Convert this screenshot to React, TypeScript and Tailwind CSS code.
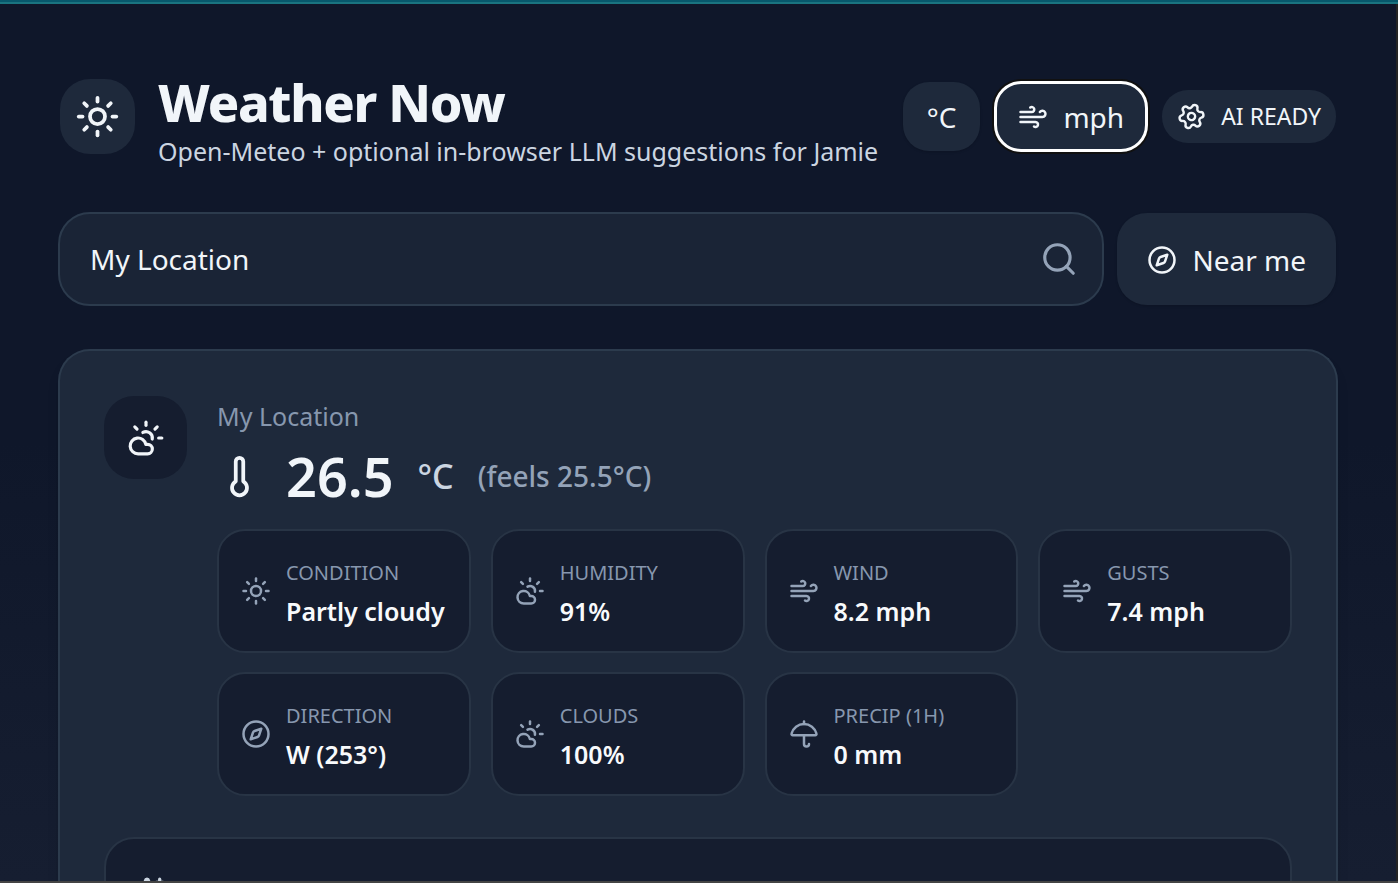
import React from "react";
import { CloudSun, Compass, Search, Settings, Sparkles, Sun, Thermometer, Umbrella, Wind, type LucideIcon } from "lucide-react";

type Metric = { label: string; value: string; icon: LucideIcon };

const metrics: Metric[] = [
  { label: "Condition", value: "Partly cloudy", icon: Sun },
  { label: "Humidity", value: "91%", icon: CloudSun },
  { label: "Wind", value: "8.2 mph", icon: Wind },
  { label: "Gusts", value: "7.4 mph", icon: Wind },
  { label: "Direction", value: "W (253°)", icon: Compass },
  { label: "Clouds", value: "100%", icon: CloudSun },
  { label: "Precip (1h)", value: "0 mm", icon: Umbrella },
];

function MetricTile({ label, value, icon: Icon }: Metric) {
  return (
    <div className="flex h-[124px] items-center gap-[15px] rounded-[28px] border-2 border-[#283445] bg-[#151d2f] px-[22px]">
      <Icon size={30} className="shrink-0 text-[#94a3b8]" />
      <div className="min-w-0 pt-0.5 whitespace-nowrap">
        <dt className="text-[20px] leading-[38px] text-[#8797ae] uppercase">{label}</dt>
        <dd className="text-[25px] leading-[38px] font-semibold text-[#f8fafc]">{value}</dd>
      </div>
    </div>
  );
}

export default function App() {
  return (
    <div className="flex h-screen flex-col overflow-hidden border-b-2 border-[#444444] font-['Noto_Sans','Open_Sans',sans-serif] text-[#f1f5f9]">
      <div className="h-1 shrink-0 border-b-2 border-[#1a7480] bg-[#08586c]" />
      <main className="min-h-0 flex-1 overflow-hidden border-r-2 border-[#242424] bg-linear-to-b from-[#0f172a] from-50% to-[#161e31] px-[58px] pt-[74px]">
        <header className="flex items-start justify-between px-0.5">
          <div className="flex items-start gap-[23px]">
            <div className="mt-px flex size-[75px] items-center justify-center rounded-[30px] bg-[#1e293b]">
              <Sun size={45} />
            </div>
            <div className="whitespace-nowrap">
              <h1 className="text-[52px] leading-[48px] font-extrabold tracking-tight">Weather Now</h1>
              <p className="text-[25px] leading-[50px] text-[#cbd5e1]">Open-Meteo + optional in-browser LLM suggestions for Jamie</p>
            </div>
          </div>
          <div className="mt-1 flex items-center gap-[15px] whitespace-nowrap">
            <button className="h-[69px] rounded-[26px] bg-[#1e293b] px-6 text-[28px] shadow-sm">°C</button>
            <button className="flex h-[69px] items-center gap-[15px] rounded-[26px] bg-[#1e293b] px-[23px] text-[28px] shadow-[0_0_0_3px_#111111] outline-3 -outline-offset-2 outline-white">
              <Wind size={30} />
              mph
            </button>
            <div className="flex h-[53px] items-center gap-[15px] rounded-[26px] bg-[#1e293b] px-[15px] text-[23px]">
              <Settings size={29} className="rotate-20" />
              AI READY
            </div>
          </div>
        </header>

        <div className="mt-9 flex items-center gap-[13px] pr-0.5">
          <label className="flex h-[94px] flex-1 items-center rounded-[32px] border-2 border-[#2c3b4d] bg-[#1a2436] pr-6 pl-[30px]">
            <input aria-label="Location" defaultValue="My Location" className="min-w-0 flex-1 bg-transparent text-[28px] outline-none" />
            <Search size={38} className="text-[#94a3b8]" />
          </label>
          <button className="flex h-[92px] items-center gap-[15px] rounded-[30px] bg-[#1e293b] px-[30px] pt-0.5 text-[28px] shadow-sm">
            <Compass size={30} />
            Near me
          </button>
        </div>

        <section className="mt-[43px] rounded-t-[32px] border-2 border-b-0 border-[#2c3b4d] bg-[#1e293b] px-11 pt-[45px] shadow-lg">
          <div className="flex items-start gap-[30px]">
            <div className="flex size-[83px] shrink-0 items-center justify-center rounded-[30px] bg-[#151d2f]">
              <CloudSun size={38} />
            </div>
            <div className="min-w-0 flex-1">
              <p className="text-[25px] leading-10 text-[#8797ae]">My Location</p>
              <div className="flex h-20 items-center whitespace-nowrap">
                <Thermometer size={45} />
                <span className="ml-6 text-[54px] font-semibold">26.5</span>
                <span className="ml-6 text-[34px] font-medium text-[#cbd5e1]">°C</span>
                <span className="ml-6 text-[28px] font-medium text-[#94a3b8]">(feels 25.5°C)</span>
              </div>
              <dl className="mt-[13px] grid grid-cols-4 gap-x-5 gap-y-[19px]">
                {metrics.map((m) => (
                  <MetricTile key={m.label} {...m} />
                ))}
              </dl>
            </div>
          </div>
          <div className="mt-[41px] h-[200px] rounded-[30px] border-2 border-[#283445] bg-[#151d2f] px-[22px] pt-[37px]">
            <Sparkles size={38} className="text-[#cbd5e1]" />
          </div>
        </section>
      </main>
    </div>
  );
}
